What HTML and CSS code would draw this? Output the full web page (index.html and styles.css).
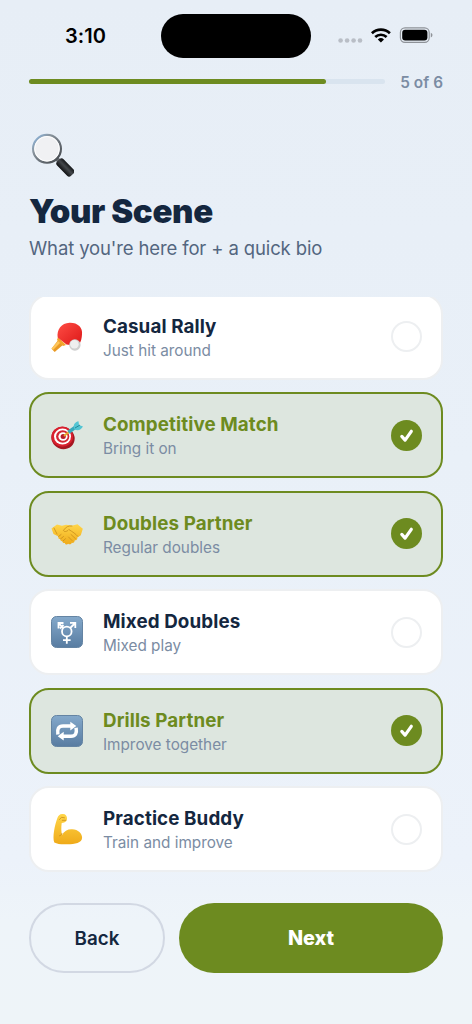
FILE: index.html
```html
<!DOCTYPE html>
<html lang="en">
<head>
<meta charset="utf-8">
<title>Your Scene</title>
<link rel="stylesheet" href="styles.css">
</head>
<body>
<div class="screen">
  <header class="status">
    <span class="time">3:10</span>
    <span class="island"></span>
    <svg class="system" width="96" height="18" viewBox="0 0 96 18">
      <g fill="#b9bec6"><circle cx="3.6" cy="9.5" r="2.3"/><circle cx="10.1" cy="9.5" r="2.3"/><circle cx="16.6" cy="9.5" r="2.3"/><circle cx="23" cy="9.5" r="2.3"/></g>
      <g fill="none" stroke="#000" stroke-width="2.7"><path d="M34.9 2.2a13.2 13.2 0 0 1 18 0"/><path d="M38.2 6a8.3 8.3 0 0 1 11.4 0"/></g>
      <path d="M40.8 8.500a4.500 4.500 0 0 1 6.200 0l-3.100 3z" fill="#000"/>
      <rect x="63.400" y="-3.200" width="28.800" height="14.600" rx="4.600" fill="none" stroke="#8e9298" stroke-width="1.200"/>
      <rect x="65.200" y="-1.300" width="25.200" height="10.800" rx="3" fill="#000"/>
      <path d="M93.800 1.800q1.700 .7 1.700 2.300t-1.700 2.300z" fill="#8e9298"/>
    </svg>
  </header>
  <div class="progress">
    <div class="track"><div class="fill"></div></div>
    <span class="step">5 of 6</span>
  </div>
  <section class="intro">
    <svg class="lens" width="45" height="45" viewBox="0 0 45 45">
      <defs>
        <linearGradient id="rim" x2="1" y2="1"><stop stop-color="#8bbcec"/><stop offset=".3" stop-color="#8b969f"/><stop offset="1" stop-color="#3e4145"/></linearGradient>
        <linearGradient id="grip" x1="0" y1="0" x2="0" y2="1"><stop stop-color="#151719"/><stop offset=".45" stop-color="#44484c"/><stop offset="1" stop-color="#101113"/></linearGradient>
      </defs>
      <path d="M27 25l4 4" stroke="#686c70" stroke-width="4"/>
      <rect x="0" y="-4.500" width="20" height="9" rx="2.800" fill="url(#grip)" transform="translate(29.400 27.300) rotate(46)"/>
      <circle cx="18" cy="15.800" r="13.900" fill="#f0f1f3" stroke="url(#rim)" stroke-width="2.200"/>
      <circle cx="18" cy="15.800" r="12.300" fill="none" stroke="#fff" stroke-width="1"/>
    </svg>
    <h1 class="title">Your Scene</h1>
    <p class="subtitle">What you're here for + a quick bio</p>
  </section>
  <main class="options">
    <div class="list">
      <div class="card">
        <svg class="emoji" viewBox="0 0 32 32">
          <defs><linearGradient id="bat" x2="1" y2="1"><stop stop-color="#ff4d45"/><stop offset="1" stop-color="#dc1717"/></linearGradient></defs>
          <path d="M8 18l5 5-9.300 8-3.200-3.200z" fill="#e99a25"/><path d="M8 19l2 2-8 8-1.500-1.500z" fill="#ffc65a"/>
          <path d="M7 16l8 8-3 1-6-6z" fill="#f3a52c"/>
          <path d="M6.700 16.500C5.500 9 10.500 2 18.500 1.800 26.500 1.500 32 6.500 31 13.500c-.2 4-1 7-3 10.200-4 1-8 .6-12.500-.2z" fill="url(#bat)"/>
          <circle cx="23.900" cy="24" r="5.700" fill="#cfcfcf"/><circle cx="23.400" cy="23.200" r="4.300" fill="#efefef"/>
        </svg>
        <div class="copy"><h2 class="name">Casual Rally</h2><p class="note">Just hit around</p></div>
        <span class="radio"></span>
      </div>
      <div class="card selected">
        <svg class="emoji" viewBox="0 0 32 32">
          <ellipse cx="12" cy="19" rx="11.800" ry="11" fill="#a51621" transform="rotate(25 12 19)"/>
          <ellipse cx="11.300" cy="17.600" rx="10.800" ry="10.200" fill="#d9202e"/>
          <ellipse cx="11.500" cy="17.600" rx="8.500" ry="8" fill="#fff"/><ellipse cx="11.700" cy="17.500" rx="6.600" ry="6.200" fill="#d32633"/>
          <ellipse cx="12" cy="17.500" rx="4.600" ry="4.300" fill="#fff"/><ellipse cx="12.200" cy="17.400" rx="2.600" ry="2.500" fill="#b71c28"/>
          <path d="M13 17l6-5" stroke="#e6a72c" stroke-width="2"/><path d="M17.500 13.200l8-5.800" stroke="#36a9bb" stroke-width="3.600"/>
          <path d="M23 9c-1-4 1.500-6 4.500-6.800L28 6l4 1.500c-2 3.500-5 4.500-8.500 3z" fill="#53c5d3"/><path d="M24 9l5-3" stroke="#258b9b"/>
        </svg>
        <div class="copy"><h2 class="name">Competitive Match</h2><p class="note">Bring it on</p></div>
        <span class="radio"><svg class="tick" viewBox="0 0 31 31"><path d="M10.800 16.400l3.300 3.700 6.200-8.800"/></svg></span>
      </div>
      <div class="card selected">
        <svg class="emoji" viewBox="0 0 32 32">
          <defs><linearGradient id="skin" x2="0" y2="1"><stop stop-color="#ffd649"/><stop offset="1" stop-color="#efaa19"/></linearGradient></defs>
          <path d="M.5 10.500L6 6.500l5 1.200 4-1 6.500.8 5-1.200 5.300 4.500-2 6.500-3.500 2.200c.5 2-1 3-2.500 2.800-.2 2-1.500 3-3 2.500-.7 1.800-2.400 1.900-3.600 1-1 1.300-3 1-3.300-.8-1.500.4-2.500-.5-2.300-1.800-1.600.2-2.500-.8-2.100-2.200-1.900 0-2.600-1-2-2.600L2.500 16z" fill="url(#skin)"/>
          <path d="M21 8c-4-.5-6 1-8.500 4.300.5 2 3.500 1.500 5.300-.8 4 2.500 7 4.500 9 6.800M20 16.500l4.500 4.200M17.500 19l3.500 3.500M7.500 18.500l2.600-2M9.500 21l3-2.500M12 23l2.500-2.300M3 10l3 6" fill="none" stroke="#c98d1a" stroke-width=".8" stroke-linecap="round"/>
        </svg>
        <div class="copy"><h2 class="name">Doubles Partner</h2><p class="note">Regular doubles</p></div>
        <span class="radio"><svg class="tick" viewBox="0 0 31 31"><path d="M10.800 16.400l3.300 3.700 6.200-8.800"/></svg></span>
      </div>
      <div class="card">
        <svg class="emoji" viewBox="0 0 32 32">
          <defs><linearGradient id="tile" x2="0" y2="1"><stop stop-color="#84a9cb"/><stop offset="1" stop-color="#587ca1"/></linearGradient></defs>
          <rect x=".5" y=".5" width="31" height="31" rx="5" fill="url(#tile)" stroke="#6484a3"/>
          <g fill="none" stroke="#fff" stroke-width="1.800"><circle cx="15.800" cy="15.500" r="4.800"/><path d="M15.800 20.300v7.500M12 24.200h7.600M12.300 12L7.500 7.200M19.200 12l5-5M7.500 12.500V7H12.500M19 6.800h5.300V12M9 12.500l3.500-3.500"/></g>
        </svg>
        <div class="copy"><h2 class="name">Mixed Doubles</h2><p class="note">Mixed play</p></div>
        <span class="radio"></span>
      </div>
      <div class="card selected">
        <svg class="emoji" viewBox="0 0 32 32">
          <rect x=".5" y=".5" width="31" height="31" rx="5" fill="url(#tile)" stroke="#6484a3"/>
          <path d="M6.900 19.500q-1.500-8.500 5.100-8.500h8M25.100 12.700q1.500 8.500-5.100 8.500h-8" fill="none" stroke="#fff" stroke-width="3.500"/>
          <path d="M19.300 6.700v8.800l6-4.400zM12.700 16.800v8.800l-6-4.400z" fill="#fff"/>
        </svg>
        <div class="copy"><h2 class="name">Drills Partner</h2><p class="note">Improve together</p></div>
        <span class="radio"><svg class="tick" viewBox="0 0 31 31"><path d="M10.800 16.400l3.300 3.700 6.200-8.800"/></svg></span>
      </div>
      <div class="card">
        <svg class="emoji" viewBox="0 0 32 32">
          <path d="M3.300 29.500C1.200 24 3.800 12 6.200 5.500 7.200 2.500 9 .8 11.500 1c2.800-.3 4.300 1.500 4.500 4 .2 2.300-1 4-2.800 4.400l-2.500.5c-.6 4.500-.5 8.500.3 12 2.200-4.200 6-6 10.200-5.700 6 .3 10 4.200 9.900 8.500-.1 5.300-7.200 6.300-14.700 6.500-5.500.2-10 0-13.100-1.700z" fill="url(#skin)"/>
          <path d="M11 20.500c-.3 1.200-1.300 2-2.500 2.300M8.500 6.500l2-2.200 3 .5M11.300 7.300h3.500" fill="none" stroke="#c98d1a" stroke-width=".8" stroke-linecap="round"/>
        </svg>
        <div class="copy"><h2 class="name">Practice Buddy</h2><p class="note">Train and improve</p></div>
        <span class="radio"></span>
      </div>
    </div>
  </main>
  <footer class="actions">
    <button class="button back">Back</button>
    <button class="button next">Next</button>
  </footer>
</div>
</body>
</html>
```
FILE: styles.css
```css
* { box-sizing: border-box; }
body { margin: 0; font-family: Inter, sans-serif; color: #14273f; }
h1, h2, p { margin: 0; }
.screen {
  width: 472px;
  height: 1024px;
  padding: 0 29px;
  overflow: hidden;
  display: flex;
  flex-direction: column;
  background: linear-gradient(180deg, #e7eef6 0%, #e9f0f8 45%, #ecf2fa 84%, #eef4f9 90%, #eef4f8 100%);
}
.status {
  height: 72px;
  flex: none;
  display: grid;
  grid-template-columns: 132px 150px 1fr;
  align-items: center;
}
.time { padding-left: 36px; font-size: 20px; font-weight: 600; letter-spacing: 0.1px; color: #000; line-height: 24px; }
.island { height: 44.5px; border-radius: 23px; background: #000; }
.system { margin: 8px 0 0 26px; overflow: visible; }
.progress { height: 20px; flex: none; display: flex; align-items: center; justify-content: space-between; }
.track { width: 356px; height: 5px; margin-bottom: 2px; border-radius: 3px; background: #d9e4ef; }
.fill { width: 83.33%; height: 5px; border-radius: 3px; background: #6d8b20; }
.step { font-size: 15.3px; font-weight: 600; letter-spacing: 0.08px; line-height: 20px; padding-top: 1px; color: #7b8ca3; white-space: nowrap; }
.intro { height: 205px; flex: none; padding-top: 41px; }
.lens { display: block; }
.title { margin-top: 13px; font-size: 33px; line-height: 40px; font-weight: 900; letter-spacing: -0.35px; white-space: nowrap; }
.subtitle { margin-top: 5px; font-size: 18.5px; line-height: 24px; letter-spacing: -0.13px; color: #53667f; white-space: nowrap; }
.options { height: 577px; flex: none; overflow: hidden; }
.list { display: flex; flex-direction: column; gap: 12.5px; margin-top: -3.5px; }
.card {
  height: 86px;
  flex: none;
  display: flex;
  align-items: center;
  padding: 0 19px 0 20px;
  border: 2px solid #edeff1;
  border-radius: 20px;
  background: #fff;
}
.selected { border-color: #6d8b20; background: #dde6df; }
.emoji { width: 32px; height: 32px; flex: none; }
.copy { flex: 1; margin-left: 20px; padding-top: 2.5px; }
.name { font-size: 18.8px; line-height: 24px; font-weight: 700; letter-spacing: 0.1px; white-space: nowrap; }
.selected .name { color: #6d8b20; }
.note { font-size: 15.3px; line-height: 20px; margin-top: 2px; color: #7b8ca3; white-space: nowrap; }
.radio { width: 31px; height: 31px; flex: none; border-radius: 50%; border: 2px solid #edeff1; }
.selected .radio { border: 0; background: #6d8b20; }
.tick { display: block; width: 31px; height: 31px; fill: none; stroke: #fff; stroke-width: 3.2; stroke-linecap: round; stroke-linejoin: round; }
.actions { display: flex; gap: 14px; margin-top: 29px; height: 70px; }
.button { height: 70px; padding: 0; border-radius: 35px; font-family: inherit; font-size: 18.8px; }
.back { width: 136px; border: 2px solid #d2d8e3; background: transparent; color: #14273f; font-weight: 600; }
.next { flex: 1; border: 0; padding-bottom: 1px; background: #6d8b20; color: #fff; font-size: 19.8px; font-weight: 800; }
```
